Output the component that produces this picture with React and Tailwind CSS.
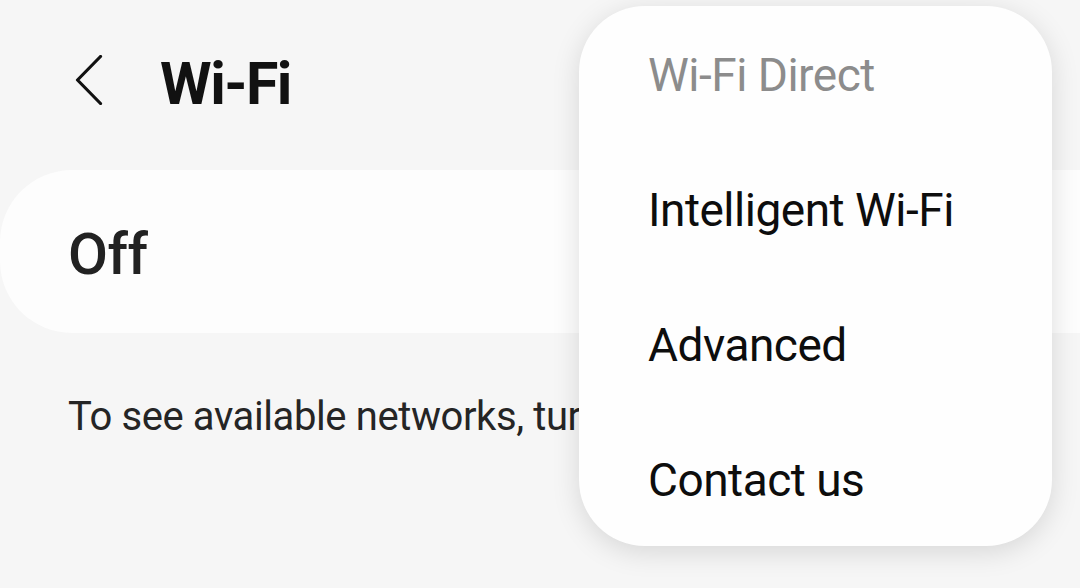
export default function App() {
  const font = { fontFamily: 'Roboto, "Noto Sans", "Liberation Sans", sans-serif' };
  return (
    <div className="relative w-[1080px] h-[588px] overflow-hidden bg-[#f6f6f6]" style={font}>
      {/* Header */}
      <div className="h-[170px] pl-[75px] pt-[49px] flex items-start">
        <svg className="mt-[6px] shrink-0" width="28" height="50" viewBox="0 0 28 50" fill="none">
          <path d="M25.5 1.5 L2.5 25 L25.5 48.5" stroke="#111" strokeWidth="3.2" strokeLinecap="round" strokeLinejoin="round" />
        </svg>
        <h1 className="ml-[57px] text-[59px] leading-[70px] font-bold text-[#111] tracking-[-1.5px]">Wi-Fi</h1>
      </div>

      {/* Off card */}
      <div className="h-[163px] rounded-l-[72px] bg-[#fdfdfd]">
        <span className="block pl-[68px] pt-[6px] text-[58px] leading-[157px] font-medium text-[#222] tracking-[-0.5px]">Off</span>
      </div>

      {/* Body text */}
      <p className="mt-[54px] pl-[68px] text-[40px] leading-[60px] text-[#252525] whitespace-nowrap tracking-[-0.4px]">
        To see available networks, turn on Wi-Fi.
      </p>

      {/* Overflow menu */}
      <div className="absolute left-[579px] top-[6px] w-[473px] h-[540px] rounded-[66px] bg-[#fefefe] shadow-[0_6px_28px_rgba(0,0,0,0.13)] pt-[2px] pl-[69px]">
        <div className="h-[135px] text-[46px] leading-[135px] tracking-[-0.5px] text-[#8c8c8c]">Wi-Fi Direct</div>
        <div className="h-[135px] text-[46px] leading-[135px] tracking-[-0.5px] text-[#0d0d0d]">Intelligent Wi-Fi</div>
        <div className="h-[135px] text-[46px] leading-[135px] tracking-[-0.5px] text-[#0d0d0d]">Advanced</div>
        <div className="h-[135px] text-[46px] leading-[135px] tracking-[-0.5px] text-[#0d0d0d]">Contact us</div>
      </div>
    </div>
  );
}
